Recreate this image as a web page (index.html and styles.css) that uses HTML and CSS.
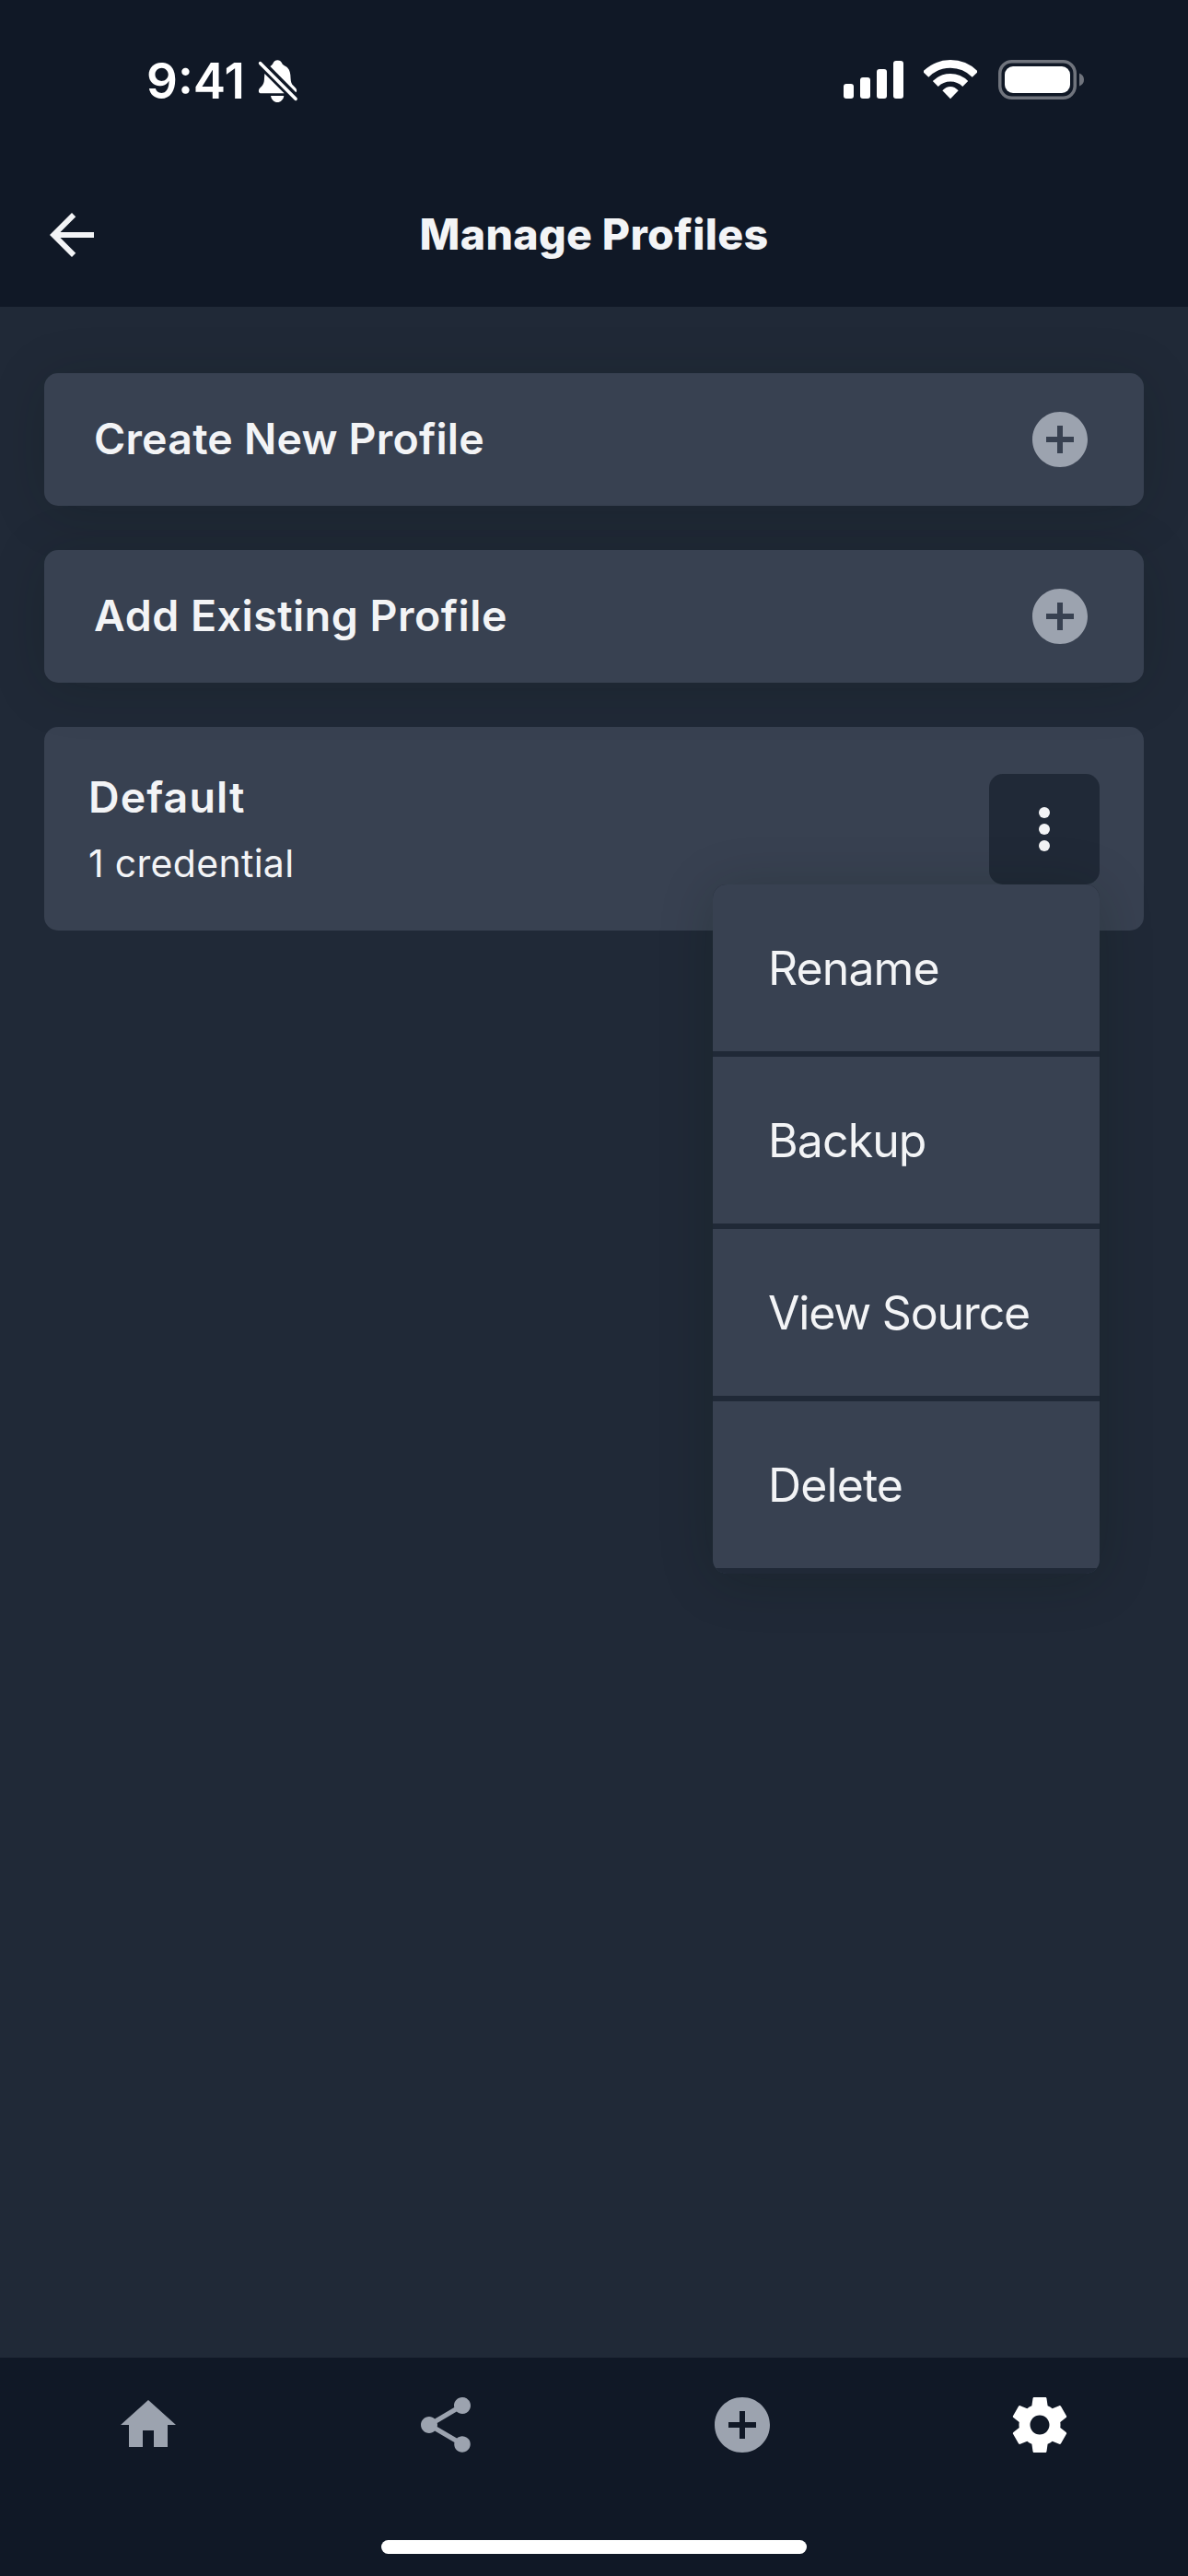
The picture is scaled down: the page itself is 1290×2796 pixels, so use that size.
FILE: index.html
```
<!DOCTYPE html>
<html lang="en">
<head>
<meta charset="utf-8">
<title>Manage Profiles</title>
<link rel="stylesheet" href="styles.css">
</head>
<body>
<svg class="sprite" width="0" height="0" aria-hidden="true">
  <symbol id="plus-circle" viewBox="0 0 24 24"><path d="M12 2C6.48 2 2 6.48 2 12s4.48 10 10 10 10-4.48 10-10S17.52 2 12 2zm5 11h-4v4h-2v-4H7v-2h4V7h2v4h4v2z"/></symbol>
</svg>
<div class="screen">
  <header class="top">
    <div class="status">
      <div class="status-left">
        <span class="time">9:41</span>
        <svg class="bell" viewBox="840 72 132 144">
          <path d="M880 96C885 93 888 90 890 85C893 79 898 76 904 76C910 76 915 79 918 85C920 90 924 93 929 95C941 101 945 112 946 124C947 138 947 149 952 155C958 162 965 166 966 172C967 176 966 179 964 181Z"/>
          <path d="M862 120L926 184H851C841 184 841 173 846 167C855 159 861 152 861 134Z"/>
          <path d="M882 192H925C923 205 914 213 903.500 213C893 213 884 205 882 192Z"/>
          <path class="slash" d="M848 86L963 202"/>
        </svg>
      </div>
      <div class="status-right">
        <svg class="signal" viewBox="0 0 65 41"><rect y="25" width="11" height="16" rx="3"/><rect x="18" y="18" width="11" height="23" rx="3"/><rect x="36" y="9" width="11" height="32" rx="3"/><rect x="54" width="11" height="41" rx="3"/></svg>
        <svg class="wifi" viewBox="370 75 174 129">
          <path class="arc" stroke-width="26" d="M376.500 122.500A112 112 0 0 1 537.500 122.500"/>
          <path class="arc" stroke-width="25" d="M408.300 153A68.500 68.500 0 0 1 505.700 153"/>
          <path d="M457 202L431 175Q443 162 457 162T483 175Z"/>
        </svg>
        <svg class="battery" viewBox="0 0 93 43"><rect class="shell" x="1.750" y="1.750" width="81.500" height="39.500" rx="13"/><rect x="7" y="7" width="71" height="29" rx="9"/><path class="nub" d="M88 14.500Q93 16.500 93 21.500T88 28.500Z"/></svg>
      </div>
    </div>
    <div class="nav">
      <svg class="icon" viewBox="0 0 24 24"><path d="M20 11H7.830l5.590-5.590L12 4l-8 8 8 8 1.410-1.410L7.830 13H20v-2z"/></svg>
      <h1 class="title">Manage Profiles</h1>
    </div>
  </header>

  <main class="content">
    <button class="card action raised"><span class="label create">Create New Profile</span><svg class="icon"><use href="#plus-circle"/></svg></button>
    <button class="card action raised"><span class="label add">Add Existing Profile</span><svg class="icon"><use href="#plus-circle"/></svg></button>
    <section class="card profile">
      <div class="info">
        <div class="name">Default</div>
        <div class="count">1 credential</div>
      </div>
      <div class="more">
        <svg class="icon" viewBox="0 0 24 24"><circle cx="12" cy="6" r="2"/><circle cx="12" cy="12" r="2"/><circle cx="12" cy="18" r="2"/></svg>
        <div class="menu">
          <div class="item">Rename</div>
          <div class="item">Backup</div>
          <div class="item long">View Source</div>
          <div class="item">Delete</div>
        </div>
      </div>
    </section>
  </main>

  <footer class="bottom">
    <nav class="tabs">
      <svg class="icon" viewBox="0 0 24 24"><path d="M10 20v-6h4v6h5v-8h3L12 3 2 12h3v8z"/></svg>
      <svg class="icon" viewBox="0 0 24 24"><path d="M18 16.080c-.76 0-1.440.3-1.960.77L8.910 12.700c.05-.23.09-.46.09-.7s-.04-.47-.09-.7l7.050-4.110c.54.5 1.250.81 2.040.81 1.660 0 3-1.340 3-3s-1.340-3-3-3-3 1.340-3 3c0 .24.04.47.09.7L8.040 9.810C7.500 9.310 6.790 9 6 9c-1.660 0-3 1.340-3 3s1.340 3 3 3c.79 0 1.500-.31 2.040-.81l7.120 4.160c-.05.21-.08.43-.08.65 0 1.610 1.310 2.920 2.920 2.920s2.920-1.310 2.920-2.920-1.310-2.920-2.920-2.920z"/></svg>
      <svg class="icon"><use href="#plus-circle"/></svg>
      <svg class="icon active" viewBox="0 0 24 24"><path d="M19.430 12.980c.04-.32.07-.64.07-.98s-.03-.66-.07-.98l2.110-1.650c.19-.15.24-.42.12-.64l-2-3.460c-.12-.22-.39-.3-.61-.22l-2.490 1c-.52-.4-1.080-.73-1.690-.98l-.38-2.650C14.460 2.180 14.250 2 14 2h-4c-.25 0-.46.18-.49.42l-.38 2.650c-.61.25-1.170.59-1.690.98l-2.490-1c-.23-.09-.49 0-.61.22l-2 3.460c-.13.22-.07.49.12.64l2.110 1.650c-.04.32-.07.65-.07.98s.03.66.07.98l-2.110 1.650c-.19.15-.24.42-.12.64l2 3.460c.12.22.39.3.61.22l2.490-1c.52.4 1.080.73 1.690.98l.38 2.650c.03.24.24.42.49.42h4c.25 0 .46-.18.49-.42l.38-2.650c.61-.25 1.170-.59 1.690-.98l2.490 1c.23.09.49 0 .61-.22l2-3.460c.12-.22.07-.49-.12-.64l-2.110-1.650zM12 15.500c-1.930 0-3.500-1.570-3.500-3.500s1.570-3.500 3.500-3.500 3.500 1.570 3.500 3.500-1.570 3.500-3.500 3.500z"/></svg>
    </nav>
    <div class="home-indicator"></div>
  </footer>
</div>
</body>
</html>
```
FILE: styles.css
```
* { box-sizing: border-box; }

body {
  margin: 0;
  background: #202937;
  color: #f3f4f6;
  font-family: Inter, "Liberation Sans", sans-serif;
}

svg { display: block; fill: currentColor; }
.sprite { position: absolute; }
.icon { width: 72px; height: 72px; flex: none; }

.screen {
  width: 1290px;
  height: 2796px;
  display: flex;
  flex-direction: column;
  overflow: hidden;
}

/* Header */
.top {
  height: 333px;
  background: #101826;
  position: relative;
}
.status {
  height: 177px;
  padding: 0 113px 0 159px;
  display: flex;
  justify-content: space-between;
  align-items: flex-start;
  color: #fff;
}
.status-left { display: flex; padding-top: 57px; }
.time {
  width: 121px;
  font-size: 53px;
  font-weight: 560;
  line-height: 62px;
  white-space: nowrap;
}
.bell { width: 44px; height: 48px; margin-top: 7px; }
.slash { fill: none; stroke: currentColor; stroke-width: 11; stroke-linecap: round; }
.status-right { display: flex; align-items: flex-start; padding-top: 65px; }
.signal { width: 65px; height: 41px; margin: 1px 22px 0 0; }
.wifi { width: 58px; height: 43px; margin-right: 23px; }
.arc { fill: none; stroke: currentColor; }
.battery { width: 93px; height: 43px; }
.shell { fill: none; stroke: #70747d; stroke-width: 3.500; }
.nub { fill: #70747d; }

.nav {
  height: 156px;
  padding: 0 42px;
  display: grid;
  grid-template-columns: 72px 1fr 72px;
  align-items: center;
}
.title {
  margin: -3px 0 0;
  font-size: 46.500px;
  font-weight: 800;
  line-height: 60px;
  letter-spacing: .35px;
  text-align: center;
}

/* Content */
.content {
  flex: 1;
  padding: 72px 48px;
  display: flex;
  flex-direction: column;
  gap: 48px;
}
.card {
  border: 0;
  border-radius: 15px;
  background: #384151;
  color: inherit;
  display: flex;
  align-items: center;
  justify-content: space-between;
}
.raised {
  position: relative;
  box-shadow: 0 6px 60px rgba(12, 24, 12, .16);
}
.action {
  height: 144px;
  padding: 0 55px 0 54px;
  font-family: inherit;
  font-size: 46.500px;
  font-weight: 600;
}
.action .icon { color: #9ca3af; }
.label { margin-top: -3px; }
.create { letter-spacing: .2px; }
.add { letter-spacing: .5px; }

.profile { height: 221px; padding: 0 48px; }
.info { display: flex; flex-direction: column; gap: 19px; }
.name {
  font-size: 46.500px;
  font-weight: 600;
  line-height: 56px;
  letter-spacing: 1.100px;
}
.count {
  font-size: 41px;
  line-height: 50px;
  letter-spacing: .3px;
}
.more {
  position: relative;
  z-index: 1;
  width: 120px;
  height: 120px;
  margin-top: 1px;
  border-radius: 15px;
  background: #202937;
  display: flex;
  align-items: center;
  justify-content: center;
}

/* Dropdown anchored to the more button */
.menu {
  position: absolute;
  top: 100%;
  right: 0;
  width: 420px;
  border-radius: 15px;
  background: #202937;
  overflow: hidden;
  box-shadow: 0 6px 60px rgba(12, 24, 12, .2);
}
.item {
  height: 187px;
  padding-left: 60px;
  border-bottom: 6px solid #202937;
  background: #384151;
  font-size: 50px;
  line-height: 183px;
  letter-spacing: -.9px;
}
.long { letter-spacing: -1.200px; }

/* Tab bar */
.bottom {
  height: 237px;
  background: #101826;
  display: flex;
  flex-direction: column;
  align-items: center;
  position: relative;
}
.tabs {
  width: 100%;
  height: 146px;
  margin-bottom: 52px;
  display: grid;
  grid-template-columns: repeat(4, 1fr);
  place-items: center;
  color: #9ca3af;
}
.active { color: #fff; }
.home-indicator {
  width: 462px;
  height: 15px;
  border-radius: 8px;
  background: #fff;
}
```
